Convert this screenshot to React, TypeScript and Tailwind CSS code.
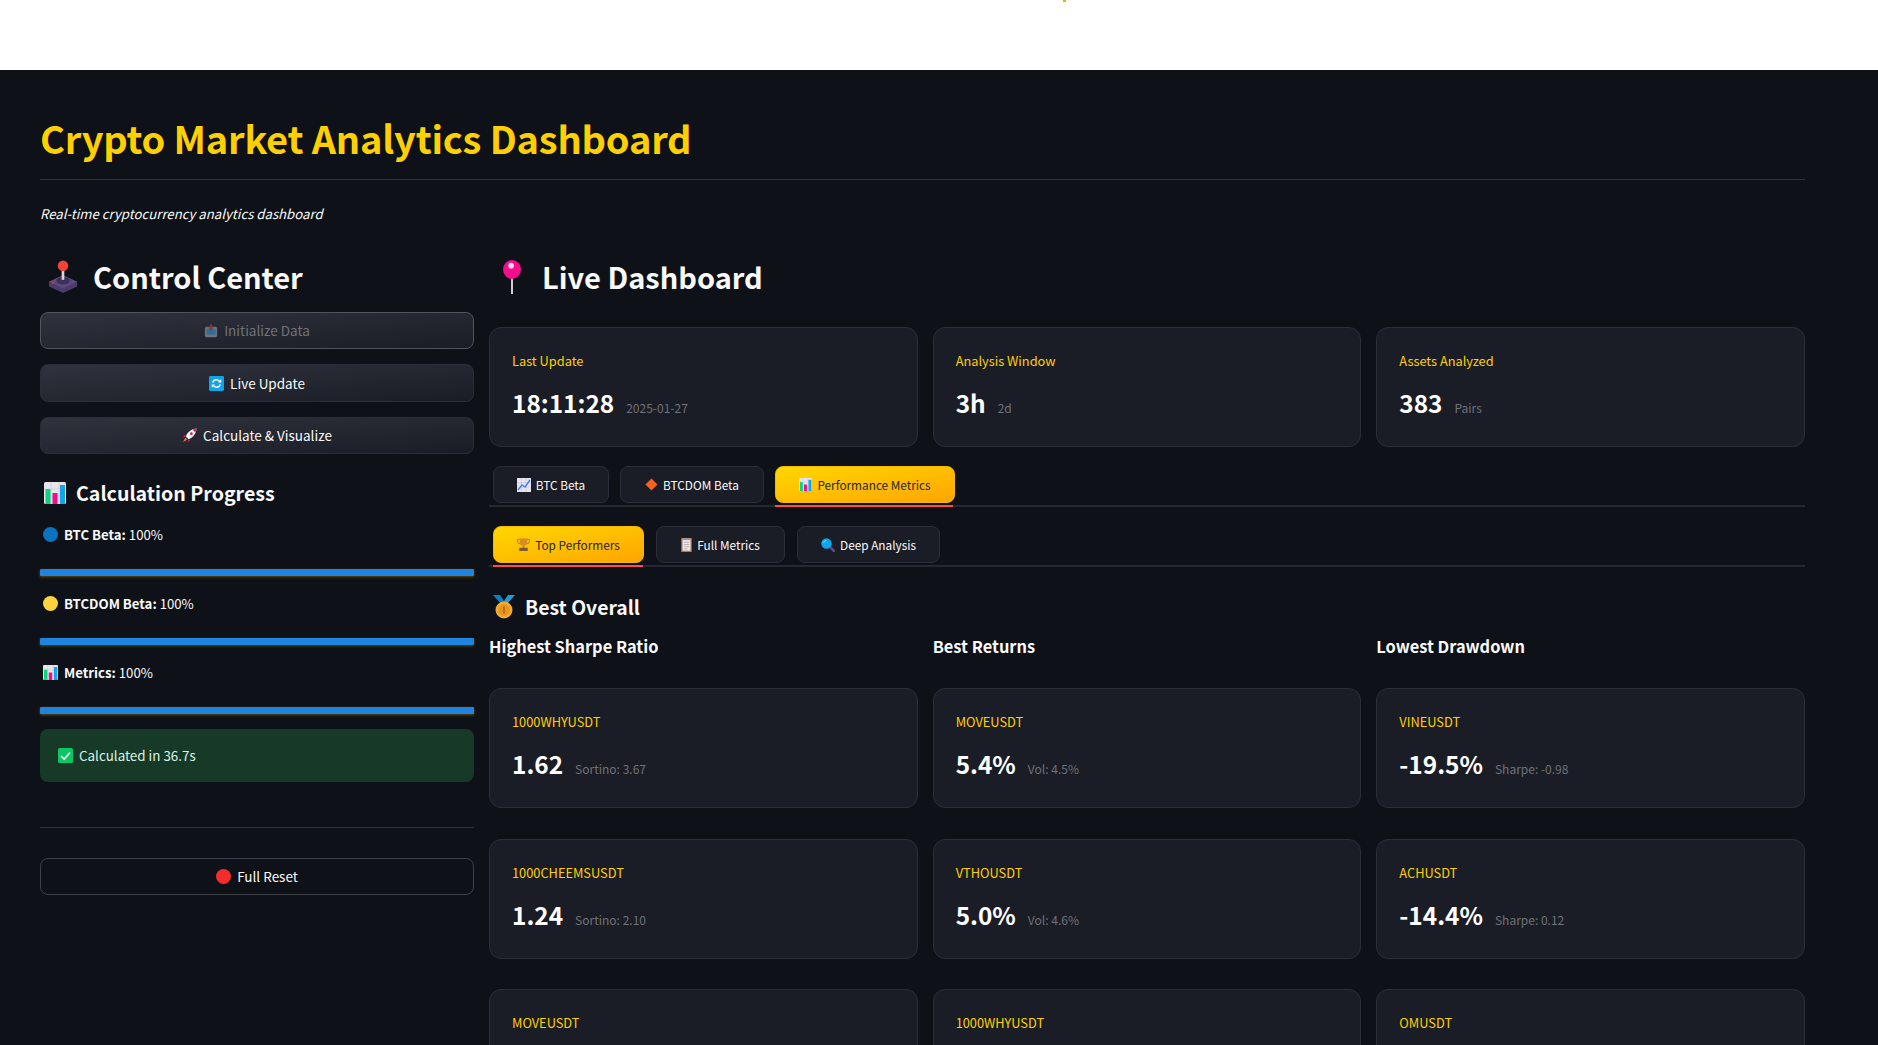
import React from 'react';

const font = "font-['Noto_Sans_CJK_SC','Liberation_Sans',sans-serif]";

type IconProps = { className?: string };

const Joystick = ({ className = '' }: IconProps) => (
  <svg viewBox="0 0 32 36" className={className}>
    <path d="M1 23 L16 16 L31 23 L31 28 L16 35 L1 28 Z" fill="#4a3b6b" />
    <path d="M1 23 L16 16 L31 23 L16 30 Z" fill="#5c4a80" />
    <ellipse cx="16" cy="22" rx="7" ry="4" fill="#3c2f58" />
    <rect x="14.6" y="9" width="2.8" height="12" fill="#d8d8d8" />
    <circle cx="16" cy="6" r="5.6" fill="#f44336" />
    <circle cx="5" cy="24" r="1" fill="#e53935" />
  </svg>
);

const Pin = ({ className = '' }: IconProps) => (
  <svg viewBox="0 0 20 36" className={className}>
    <rect x="9" y="18" width="2" height="18" fill="#d9d9d9" />
    <ellipse cx="10" cy="10" rx="9.5" ry="10" fill="#f50d8d" />
    <circle cx="9" cy="6" r="3" fill="#fbd5e8" />
  </svg>
);

const Inbox = ({ className = '' }: IconProps) => (
  <svg viewBox="0 0 16 16" className={className}>
    <rect x="1" y="3" width="14" height="12" rx="2" fill="#6f737a" />
    <rect x="3" y="6" width="10" height="6" fill="#2a6f97" />
    <rect x="7" y="0" width="2" height="5" fill="#7d3b44" />
    <path d="M5 4 H11 L8 8 Z" fill="#7d3b44" />
  </svg>
);

const Refresh = ({ className = '' }: IconProps) => (
  <svg viewBox="0 0 16 16" className={className}>
    <rect width="16" height="16" rx="1.5" fill="#0ea5e9" />
    <path d="M4 7 A4 4 0 0 1 11 5.5 M12 9 A4 4 0 0 1 5 10.5" fill="none" stroke="#fff" strokeWidth="1.6" />
    <path d="M9.5 7 H13 V3.5 Z M6.5 9 H3 V12.5 Z" fill="#fff" />
  </svg>
);

const Rocket = ({ className = '' }: IconProps) => (
  <svg viewBox="0 0 16 16" className={className}>
    <path d="M15.5 0.5 C10 1 6 4 4 9 L7 12 C12 10 15 6 15.5 0.5 Z" fill="#f1f1f4" />
    <path d="M15.5 0.5 C14 0.7 12.5 1.2 11.4 1.9 L14.1 4.6 C14.8 3.4 15.3 2 15.5 0.5 Z" fill="#e3174f" />
    <path d="M4 9 L1 10 L3 7 Z M7 12 L6 15 L9 13 Z" fill="#e3174f" />
    <circle cx="10" cy="6" r="1.5" fill="#e3174f" />
    <path d="M3.5 10.5 L5.5 12.5 L1 15 Z" fill="#f47a3c" />
  </svg>
);

const BarChart = ({ className = '' }: IconProps) => (
  <svg viewBox="0 0 22 22" className={className}>
    <rect width="22" height="22" rx="1.5" fill="#e8e4ee" />
    <path d="M0 7 H22 M0 14 H22 M7 0 V22 M15 0 V22" stroke="#cfc9da" strokeWidth="0.7" />
    <rect x="1.5" y="7" width="5" height="15" fill="#0bd47f" />
    <rect x="8.5" y="11" width="5" height="11" fill="#f50d8d" />
    <rect x="16" y="3" width="5" height="19" fill="#0ea5e9" />
  </svg>
);

const LineChart = ({ className = '' }: IconProps) => (
  <svg viewBox="0 0 14 14" className={className}>
    <rect width="14" height="14" fill="#e8e4ee" />
    <path d="M0 4.5 H14 M0 9 H14 M4.5 0 V14 M9 0 V14" stroke="#c9c3d6" strokeWidth="0.6" />
    <path d="M1 12 L5 7 L8 9 L13 2" fill="none" stroke="#3b82f6" strokeWidth="1.4" />
  </svg>
);

const Trophy = ({ className = '' }: IconProps) => (
  <svg viewBox="0 0 14 14" className={className}>
    <path d="M0.5 1.5 H13.5 V3.5 Q13.5 6 10 6.5 H4 Q0.5 6 0.5 3.5 Z" fill="none" stroke="#b9741a" strokeWidth="1" />
    <path d="M3 0.5 H11 V4 Q11 8 7 8 Q3 8 3 4 Z" fill="#d98e1f" />
    <rect x="6" y="8" width="2" height="2.5" fill="#b9741a" />
    <rect x="2.5" y="10.5" width="9" height="3.5" fill="#7a5a34" />
  </svg>
);

const Clipboard = ({ className = '' }: IconProps) => (
  <svg viewBox="0 0 12 16" className={className}>
    <rect width="12" height="16" fill="#b9774a" />
    <rect x="1.5" y="1.5" width="9" height="13" fill="#eceaf0" />
    <rect x="2" y="0" width="8" height="2.5" fill="#9a9aa3" />
    <path d="M3 5 H9 M3 7.5 H9 M3 10 H9 M3 12.5 H7" stroke="#a8a8b0" strokeWidth="1" />
  </svg>
);

const Search = ({ className = '' }: IconProps) => (
  <svg viewBox="0 0 14 14" className={className}>
    <path d="M8 8 L13 13" stroke="#5b4a8a" strokeWidth="2.6" strokeLinecap="round" />
    <circle cx="5.5" cy="5.5" r="5.2" fill="#0ea5e9" />
    <path d="M2.5 5 A3 3 0 0 1 5 2.5" stroke="#8fd8f8" strokeWidth="1" fill="none" />
  </svg>
);

const Medal = ({ className = '' }: IconProps) => (
  <svg viewBox="0 0 22 24" className={className}>
    <path d="M0 0 H7 L13 9 H8 Z" fill="#0f7cc2" />
    <path d="M22 0 H15 L9 9 H14 Z" fill="#1d9bdc" />
    <circle cx="11" cy="15" r="8.5" fill="#f3a935" />
    <circle cx="11" cy="15" r="5.8" fill="#e8951f" />
    <path d="M10 12 L11.6 11.2 V18.5 H10.4 V13 L10 13.2 Z" fill="#9a5c10" />
  </svg>
);

const CheckBox = ({ className = '' }: IconProps) => (
  <svg viewBox="0 0 15 15" className={className}>
    <rect width="15" height="15" rx="1.5" fill="#0bc763" />
    <path d="M3 8 L6.2 11 L12 4.5" fill="none" stroke="#fff" strokeWidth="1.6" />
  </svg>
);

const Dot = ({ color }: { color: string }) => (
  <span className={`w-[15px] h-[15px] rounded-full ${color}`} />
);

const Diamond = ({ className = '' }: IconProps) => (
  <svg viewBox="0 0 14 14" className={className}>
    <path d="M7 0.5 L13.5 7 L7 13.5 L0.5 7 Z" fill="#f4631e" />
  </svg>
);

const ActionButton = ({ icon, label, className = '' }: { icon: React.ReactNode; label: string; className?: string }) => (
  <div className={`flex items-center justify-center gap-[6px] rounded-lg border bg-gradient-to-br from-[#30333d] to-[#1a1d26] text-[13.5px] ${className}`}>
    {icon}
    <span>{label}</span>
  </div>
);

const ProgressRow = ({ icon, name }: { icon: React.ReactNode; name: string }) => (
  <div>
    <div className="h-[21px] flex items-center gap-[6px] pl-[3px] text-[13.2px] text-[#fafafa]">
      {icon}
      <span><b className="font-semibold">{name}:</b> 100%</span>
    </div>
    <div className="mt-[24px] h-[7px] rounded-[1px] bg-[#1f84e0] shadow-[0_1px_3px_rgba(255,190,0,0.35)]" />
  </div>
);

const TabButton = ({ icon, label, active, w }: { icon: React.ReactNode; label: string; active?: boolean; w: string }) => (
  <div
    className={`h-[37px] ${w} rounded-lg border flex items-center justify-center gap-[5px] text-[11.8px] ${
      active
        ? 'border-[#f5b800] bg-gradient-to-br from-[#ffd700] to-[#ffa500] text-[#262730]'
        : 'border-[#2b2e38] bg-[#1a1d26] text-[#fafafa]'
    }`}
  >
    {icon}
    <span>{label}</span>
  </div>
);

const TabBar = ({ children, gap, underlineClass }: { children: React.ReactNode; gap: string; underlineClass: string }) => (
  <div>
    <div className={`flex pl-[4px] ${gap}`}>{children}</div>
    <div className="mt-[2px] h-[2px] bg-[#262730]">
      <div className={`h-[2px] bg-[#ff4b4b] ${underlineClass}`} />
    </div>
  </div>
);

const Card = ({ label, value, sub }: { label: string; value?: string; sub?: string }) => (
  <div className="h-[120px] rounded-xl border border-[#2b2e38] bg-[#1a1d26] px-[22px] pt-[21px]">
    <div className="h-[24px] flex items-center text-[12.8px] text-[#ffd000]">{label}</div>
    {value && (
      <div className="mt-[12px] flex items-baseline gap-[12px]">
        <span className="text-[24.4px] leading-[36px] font-bold text-white">{value}</span>
        <span className="text-[12px] text-[#6f7278]">{sub}</span>
      </div>
    )}
  </div>
);

// third row is cut by the bottom of the window, only the symbols show
const rows = [
  { label: '1000WHYUSDT', value: '1.62', sub: 'Sortino: 3.67' },
  { label: 'MOVEUSDT', value: '5.4%', sub: 'Vol: 4.5%' },
  { label: 'VINEUSDT', value: '-19.5%', sub: 'Sharpe: -0.98' },
  { label: '1000CHEEMSUSDT', value: '1.24', sub: 'Sortino: 2.10' },
  { label: 'VTHOUSDT', value: '5.0%', sub: 'Vol: 4.6%' },
  { label: 'ACHUSDT', value: '-14.4%', sub: 'Sharpe: 0.12' },
  { label: 'MOVEUSDT' },
  { label: '1000WHYUSDT' },
  { label: 'OMUSDT' },
];

export default function App() {
  return (
    <div className={`h-[1045px] overflow-hidden flex flex-col bg-white ${font}`}>
      <div className="h-[70px] shrink-0 bg-white flex justify-center">
        <div className="ml-[250px] w-[3px] h-[2px] bg-[#a4d40f]" />
      </div>

      <main className="flex-1 min-h-0 bg-[#0e1117] pl-10 pr-[73px] pt-[30px] text-[#fafafa]">
        <h1 className="h-[74px] flex items-center text-[38px] font-bold tracking-[-0.2px] text-[#ffd000]">Crypto Market Analytics Dashboard</h1>
        <div className="mt-[5px] h-px bg-[#2f323b]" />
        <p className="mt-[23px] h-[22px] flex items-center text-[13.2px] italic">Real-time cryptocurrency analytics dashboard</p>

        <div className="mt-[29px] flex gap-[15px]">
          {/* Left column */}
          <aside className="w-[434px] shrink-0">
            <h2 className="h-[46px] flex items-center gap-[15px] pl-[8px] text-[29px] font-semibold">
              <Joystick className="w-[30px] h-[34px]" />
              Control Center
            </h2>
            <div className="mt-[12px] flex flex-col gap-[15px]">
              <ActionButton
                className="h-[37px] border-[#51545c] text-[#6f7278]"
                icon={<Inbox className="w-[14px] h-[14px]" />}
                label="Initialize Data"
              />
              <ActionButton
                className="h-[38px] border-[#2b2e38] text-[#fafafa]"
                icon={<Refresh className="w-[15px] h-[15px]" />}
                label="Live Update"
              />
              <ActionButton
                className="h-[37px] border-[#2b2e38] text-[#fafafa]"
                icon={<Rocket className="w-[15px] h-[15px]" />}
                label="Calculate & Visualize"
              />
            </div>

            <h3 className="mt-[24px] h-[30px] flex items-center gap-[10px] pl-[4px] text-[19.6px] font-semibold">
              <BarChart className="w-[22px] h-[22px]" />
              Calculation Progress
            </h3>
            <div className="mt-[16px] flex flex-col gap-[17px]">
              <ProgressRow icon={<Dot color="bg-[#0b72bd]" />} name="BTC Beta" />
              <ProgressRow icon={<Dot color="bg-[#ffd23f]" />} name="BTCDOM Beta" />
              <ProgressRow icon={<BarChart className="w-[15px] h-[15px]" />} name="Metrics" />
            </div>
            <div className="mt-[15px] h-[53px] rounded-lg bg-[#173928] flex items-center gap-[6px] pl-[18px] text-[13.4px] text-[#d6f5e2]">
              <CheckBox className="w-[15px] h-[15px]" />
              Calculated in 36.7s
            </div>
            <div className="mt-[45px] h-px bg-[#2f323b]" />
            <div className="mt-[30px] h-[37px] rounded-lg border border-[#3d4048] flex items-center justify-center gap-[6px] text-[13.5px]">
              <span className="w-[15px] h-[15px] rounded-full bg-[#f52c2c]" />
              Full Reset
            </div>
          </aside>

          {/* Right column */}
          <section className="flex-1 min-w-0">
            <h2 className="h-[46px] flex items-center gap-[20px] pl-[13px] text-[29px] font-semibold">
              <Pin className="w-[20px] h-[34px]" />
              Live Dashboard
            </h2>
            <div className="mt-[27px] grid grid-cols-3 gap-x-[15px]">
              <Card label="Last Update" value="18:11:28" sub="2025-01-27" />
              <Card label="Analysis Window" value="3h" sub="2d" />
              <Card label="Assets Analyzed" value="383" sub="Pairs" />
            </div>

            <div className="mt-[19px]">
              <TabBar gap="gap-[11px]" underlineClass="ml-[286px] w-[178px]">
                <TabButton w="w-[116px]" icon={<LineChart className="w-[14px] h-[14px]" />} label="BTC Beta" />
                <TabButton w="w-[144px]" icon={<Diamond className="w-[13px] h-[13px]" />} label="BTCDOM Beta" />
                <TabButton active w="w-[180px]" icon={<BarChart className="w-[13px] h-[13px]" />} label="Performance Metrics" />
              </TabBar>
            </div>
            <div className="mt-[19px]">
              <TabBar gap="gap-[12px]" underlineClass="ml-[4px] w-[150px]">
                <TabButton active w="w-[151px]" icon={<Trophy className="w-[13px] h-[13px]" />} label="Top Performers" />
                <TabButton w="w-[129px]" icon={<Clipboard className="w-[11px] h-[14px]" />} label="Full Metrics" />
                <TabButton w="w-[143px]" icon={<Search className="w-[14px] h-[14px]" />} label="Deep Analysis" />
              </TabBar>
            </div>

            <h3 className="mt-[23px] h-[34px] flex items-center gap-[10px] pl-[4px] text-[19.4px] font-semibold">
              <Medal className="w-[22px] h-[24px]" />
              Best Overall
            </h3>
            <div className="mt-[7px] grid grid-cols-3 gap-x-[15px] text-[16.4px] font-semibold h-[30px] items-center">
              <span>Highest Sharpe Ratio</span>
              <span>Best Returns</span>
              <span>Lowest Drawdown</span>
            </div>
            <div className="mt-[27px] grid grid-cols-3 gap-x-[15px] gap-y-[30.5px]">
              {rows.map((c, i) => (
                <Card key={i} label={c.label} value={c.value} sub={c.sub} />
              ))}
            </div>
          </section>
        </div>
      </main>
    </div>
  );
}
